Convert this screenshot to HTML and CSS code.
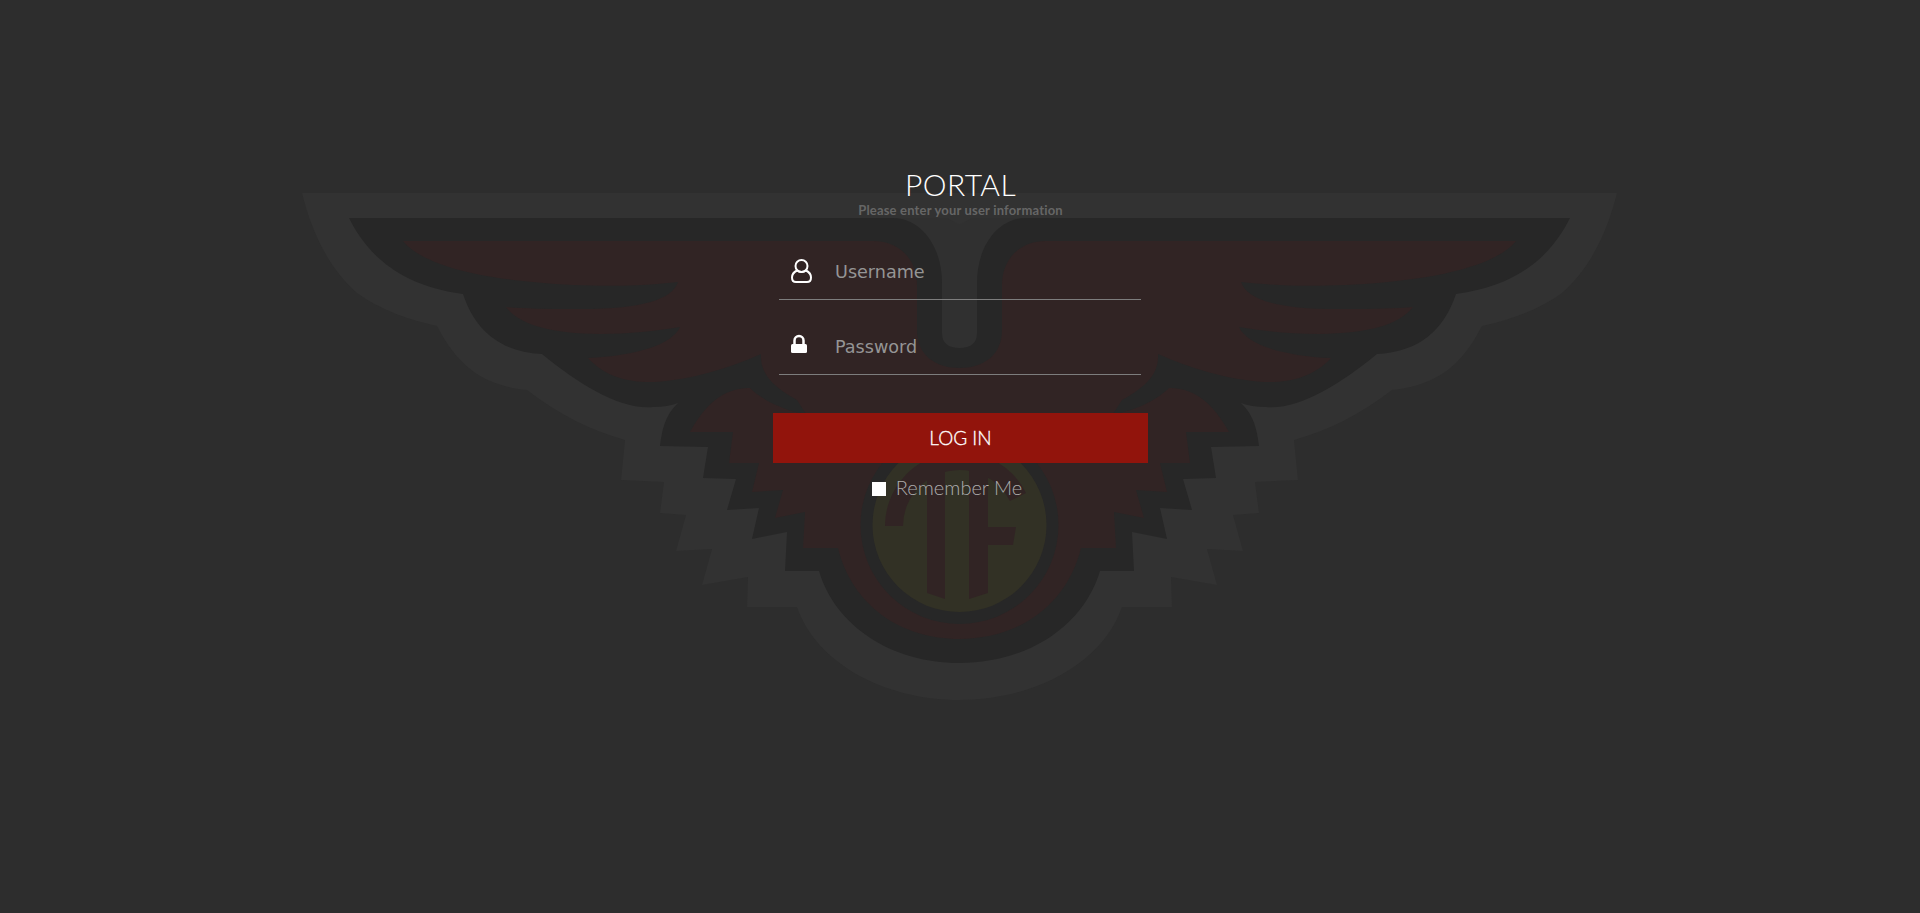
FILE: index.html
```html
<!DOCTYPE html>
<html lang="en">
<head>
<meta charset="utf-8">
<title>Portal</title>
<link rel="stylesheet" href="styles.css">
</head>
<body>
<svg class="emblem" viewBox="0 0 1920 913" aria-hidden="true">
  <defs>
    <g id="half">
      <path class="e-light" d="M960 193 L302 193 C310 225 325 265 357 293 C380 310 410 320 437 326 C450 350 470 385 527 390 C560 415 590 430 625 440 L621 480 L664 482 L660 513 L686 515 L676 551 L712 549 L702 585 L748 577 L747 607 L797 607 C815 660 880 700 960 700 Z"/>
      <path class="e-dark" d="M960 218 L349 218 C365 250 395 285 463 294 C475 330 500 352 542 354 C580 385 620 410 653 407 Q668 407 678 403 C665 415 662 430 660 446 L708 447 L703 478 L736 479 L727 510 L759 508 L752 539 L787 532 L785 571 L819 571 C835 625 890 663 960 663 Z"/>
      <path class="e-red" d="M403 241 C420 262 470 280 573 285 C620 287 650 285 678 282 C672 300 640 310 573 309 Q530 309 506 307 C520 325 550 333 600 334 C630 334 655 331 680 327 C672 345 635 356 588 358 C605 377 630 383 655 382 C690 380 730 368 761 354 C760 372 770 385 797 400 L806 414 C780 410 760 398 750 388 C735 388 712 392 690 432 L733 432 L729 463 L759 463 L752 492 L783 490 L775 518 L805 512 L803 548 L838 548 C852 605 900 639 960 639 L960 241 Z"/>
      <path class="e-dark" d="M873 241 C900 241 917 260 917 285 L917 330 C917 355 935 368 960 368 L960 218 L873 218 Z"/>
      <path class="e-stem" d="M893 218 C920 218 942 245 942 283 L942 333 Q942 348 960 348 L960 218 Z"/>
      <path class="e-light" d="M947 218 L960 225 L960 218 Z"/>
    </g>
  </defs>
  <use href="#half"/>
  <use href="#half" transform="translate(1919 0) scale(-1 1)"/>
  <circle class="e-dark" cx="959.5" cy="525" r="99"/>
  <circle class="e-olive" cx="959.5" cy="525" r="87"/>
  <path class="e-mono-arc" d="M894 526 A65.500 65.500 0 0 1 1018 497"/>
  <path class="e-red" d="M927 450 L945 450 L945 599 L927 593 Z"/>
  <path class="e-red" d="M969 450 L988 450 L988 527 L1016 527 L1013 545 L988 545 L988 593 L969 599 Z"/>
</svg>
<main class="page">
  <form class="login">
    <h1 class="title">PORTAL</h1>
    <p class="subtitle">Please enter your user information</p>
    <label class="field field-first">
      <svg class="icon" viewBox="0 0 22 24"><circle cx="10.500" cy="7" r="6" fill="none" stroke="#fff" stroke-width="2"/><path d="M6 11.500 C3 13 1 15 1 18.500 C1 21.500 2.500 23 5 23 L16 23 C18.500 23 20 21.500 20 18.500 C20 15 18 13 15 11.500 C12.500 13.500 8.500 13.500 6 11.500 Z" fill="none" stroke="#fff" stroke-width="2"/></svg>
      <input class="input" type="text" placeholder="Username">
    </label>
    <label class="field">
      <svg class="icon" viewBox="0 0 22 24"><path d="M3.500 12 L3.500 6.500 A4.500 4.500 0 0 1 12.500 6.500 L12.500 12" fill="none" stroke="#fff" stroke-width="2.500"/><rect x="0" y="10" width="16" height="9" rx="1.500" fill="#fff"/></svg>
      <input class="input" type="password" placeholder="Password">
    </label>
    <button class="submit" type="button">LOG IN</button>
    <label class="remember"><span class="check"></span>Remember Me</label>
  </form>
</main>
</body>
</html>
```
FILE: styles.css
```css
* { box-sizing: border-box; }
html, body { margin: 0; height: 100%; }
body { background: #2d2d2d; overflow: hidden; font-family: "Lato", "Liberation Sans", sans-serif; }
.emblem { position: absolute; left: 0; top: 0; width: 1920px; height: 913px; }
.e-light { fill: #323232; }
.e-stem { fill: #303030; }
.e-dark { fill: #272727; }
.e-red { fill: #312424; }
.e-olive { fill: #323125; }
.e-mono-arc { fill: none; stroke: #312424; stroke-width: 18; }
.page { position: relative; display: flex; justify-content: center; padding-top: 166px; padding-left: 1px; }
.login { width: 375px; display: flex; flex-direction: column; align-items: center; }
.title { margin: 0; font-size: 30px; line-height: 36px; font-weight: 300; color: #fff; letter-spacing: 0.4px; }
.subtitle { margin: 0; font-size: 13px; line-height: 16px; font-weight: 700; color: #666; letter-spacing: 0.18px; }
.field { width: 362px; height: 75px; align-self: flex-start; margin-left: 6px; display: flex; align-items: flex-end; padding: 0 0 16px 12px; border-bottom: 1px solid #7d7d7d; }
.field-first { height: 82px; }
.icon { width: 22px; height: 24px; flex: none; }
.input { flex: 1; min-width: 0; margin: 0 0 -1px 22px; border: 0; padding: 0; outline: 0; background: transparent; font-family: "DejaVu Sans", sans-serif; font-size: 17.6px; line-height: 24px; color: #fff; }
.input::placeholder { color: #959595; opacity: 1; }
.submit { margin-top: 38px; width: 375px; height: 50px; border: 0; padding: 0 0 2px; background: #92140c; color: #fff; font-family: inherit; font-size: 19px; font-weight: 300; -webkit-text-stroke: 0.3px #fff; }
.remember { margin-top: 12px; padding-right: 27px; display: flex; align-items: center; gap: 10px; font-size: 20px; line-height: 24px; font-weight: 300; color: #adadad; }
.check { width: 14px; height: 14px; margin-top: 4px; background: #fff; }
```
